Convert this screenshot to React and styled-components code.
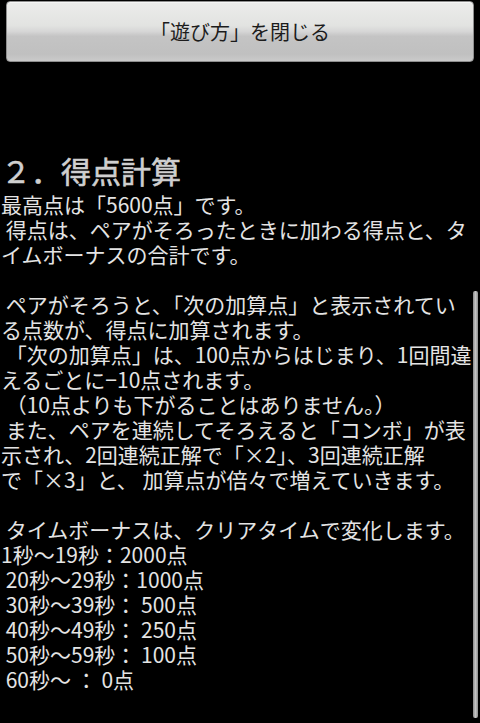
import React from "react";
import styled, { createGlobalStyle } from "styled-components";

const Global = createGlobalStyle`
  html, body {
    margin: 0;
    padding: 0;
    background: #000;
  }
  body {
    font-family: "Noto Sans CJK JP", "Noto Sans", sans-serif;
  }
`;

const Screen = styled.div`
  position: relative;
  width: 480px;
  height: 723px;
  background: #000;
  overflow: hidden;
`;

const ButtonBar = styled.div`
  display: flex;
  padding: 1px 6px 0;
`;

const CloseButton = styled.button`
  flex: 1;
  height: 61px;
  border: 1px solid #8e8e8e;
  border-radius: 4px;
  background: linear-gradient(
    to bottom,
    #ececeb 0%,
    #e2e3e1 40%,
    #d6d6d6 50%,
    #c4c4c4 58%,
    #c0c0c0 88%,
    #cacaca 100%
  );
  box-shadow: inset 0 1px 0 #f6f6f6;
  font-family: "Noto Sans CJK JP", sans-serif;
  font-size: 20px;
  color: #1c1c1c;
  padding: 0;
  cursor: pointer;
`;

const Content = styled.div`
  padding: 86px 0 0 1px;
`;

const Heading = styled.h2`
  margin: 0;
  font-size: 30px;
  line-height: 44px;
  font-weight: 400;
  -webkit-text-stroke: 0.6px #cfcfcf;
  color: #cfcfcf;
  white-space: pre;
`;

const Line = styled.div`
  font-size: 21px;
  line-height: 25px;
  height: 25px;
  color: #e4e4e4;
  white-space: pre;
`;

const ScrollThumb = styled.div`
  position: absolute;
  left: 473px;
  top: 291px;
  width: 5px;
  height: 427px;
  border-radius: 2px;
  background: linear-gradient(to right, #8a8a8a, #c4c4c4 50%, #8e8e8e);
`;

const lines = [
  "最高点は「5600点」です。",
  " 得点は、ペアがそろったときに加わる得点と、タ",
  "イムボーナスの合計です。",
  "",
  " ペアがそろうと、「次の加算点」と表示されてい",
  "る点数が、得点に加算されます。",
  " 「次の加算点」は、100点からはじまり、1回間違",
  "えるごとに−10点されます。",
  " （10点よりも下がることはありません。）",
  " また、ペアを連続してそろえると「コンボ」が表",
  "示され、2回連続正解で「×2」、3回連続正解",
  "で「×3」と、 加算点が倍々で増えていきます。",
  "",
  " タイムボーナスは、クリアタイムで変化します。",
  "1秒〜19秒：2000点",
  " 20秒〜29秒：1000点",
  " 30秒〜39秒： 500点",
  " 40秒〜49秒： 250点",
  " 50秒〜59秒： 100点",
  " 60秒〜 ： 0点",
];

export default function App() {
  return (
    <Screen>
      <Global />
      <ButtonBar>
        <CloseButton>「遊び方」を閉じる</CloseButton>
      </ButtonBar>
      <Content>
        <Heading>２．得点計算</Heading>
        {lines.map((t, i) => (
          <Line key={i}>{t}</Line>
        ))}
      </Content>
      <ScrollThumb />
    </Screen>
  );
}
